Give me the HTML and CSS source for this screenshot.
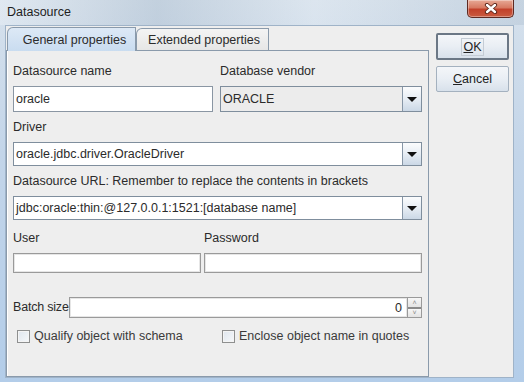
FILE: index.html
```html
<!DOCTYPE html>
<html lang="en">
<head>
    <meta charset="UTF-8">
    <title>Datasource</title>
    <link rel="stylesheet" href="styles.css">
</head>
<body>
    <div class="window">
        <div class="titlebar">
            <span class="title">Datasource</span>
            <div class="close-btn">
                <svg width="14" height="11" viewBox="0 0 14 11">
                    <path d="M3 2 L11 9 M11 2 L3 9" stroke="#5a2418" stroke-width="4.2" stroke-linecap="round"/>
                    <path d="M3 2 L11 9 M11 2 L3 9" stroke="#ffffff" stroke-width="2.4" stroke-linecap="round"/>
                </svg>
            </div>
        </div>

        <div class="client">
            <div class="tabpane">
                <div class="tabs">
                    <div class="tab selected">General properties</div>
                    <div class="tab">Extended properties</div>
                </div>
                <div class="panel">
                    <div class="row two-col">
                        <label>Datasource name</label>
                        <label>Database vendor</label>
                    </div>
                    <div class="row two-col field-row">
                        <div class="textfield tall">oracle</div>
                        <div class="combo readonly tall">
                            <span class="combo-text">ORACLE</span>
                            <span class="arrow-btn"><i class="arrow"></i></span>
                        </div>
                    </div>

                    <label class="row gap-label">Driver</label>
                    <div class="combo field-row">
                        <span class="combo-text">oracle.jdbc.driver.OracleDriver</span>
                        <span class="arrow-btn"><i class="arrow"></i></span>
                    </div>

                    <label class="row gap-label">Datasource URL: Remember to replace the contents in brackets</label>
                    <div class="combo field-row url">
                        <span class="combo-text">jdbc:oracle:thin:@127.0.0.1:1521:[database name]</span>
                        <span class="arrow-btn"><i class="arrow"></i></span>
                    </div>

                    <div class="row creds user-labels">
                        <label>User</label>
                        <label>Password</label>
                    </div>
                    <div class="row creds field-row">
                        <div class="textfield short"></div>
                        <div class="textfield short"></div>
                    </div>

                    <div class="batch-row">
                        <label class="batch-label">Batch size</label>
                        <div class="textfield short batch">0</div>
                        <div class="spinner">
                            <span class="spin up">&#708;</span>
                            <span class="spin down">&#709;</span>
                        </div>
                    </div>

                    <div class="check-row">
                        <div class="check"><span class="box"></span>Qualify object with schema</div>
                        <div class="check"><span class="box"></span>Enclose object name in quotes</div>
                    </div>
                </div>
            </div>

            <div class="buttons">
                <button class="btn default"><span class="focus"><u>O</u>K</span></button>
                <button class="btn"><u>C</u>ancel</button>
            </div>
        </div>
    </div>
</body>
</html>
```

FILE: styles.css
```css
* {
    box-sizing: border-box;
}

body {
    margin: 0;
    font-family: "Liberation Sans", Arial, sans-serif;
    font-size: 12.5px;
    color: #2b2b2b;
}

.window {
    width: 524px;
    height: 382px;
    display: flex;
    flex-direction: column;
    background: linear-gradient(to bottom, #d6e1ec 0%, #c3d5e9 40%, #b3cde9 100%);
}

.titlebar {
    height: 25px;
    display: flex;
    align-items: flex-start;
    padding-left: 7px;
    background: linear-gradient(to right, rgba(255,255,255,0.25), rgba(150,170,190,0.3) 30%, rgba(255,255,255,0.15) 60%, rgba(150,170,190,0.25));
}

.title {
    margin-top: 5px;
    color: #1e1e1e;
}

.close-btn {
    margin-left: auto;
    margin-right: 10px;
    width: 47px;
    height: 18px;
    border: 1px solid #5e2a22;
    border-top: none;
    border-radius: 0 0 5px 5px;
    background: linear-gradient(to bottom, #e7a995 0%, #d77a62 45%, #c2412a 55%, #c95b40 100%);
    display: flex;
    align-items: center;
    justify-content: center;
    box-shadow: inset 0 0 0 1px rgba(255,255,255,0.35);
}

.client {
    flex: 1;
    margin: 0 10px 4px 5px;
    border: 1px solid #9fb3c8;
    background: #eeeeee;
    display: flex;
    padding: 1px 4px 0 0;
}

.tabpane {
    width: 423px;
    display: flex;
    flex-direction: column;
}

.tabs {
    height: 24px;
    display: flex;
    align-items: flex-end;
    padding-left: 1px;
    margin-bottom: -1px;
    position: relative;
    z-index: 1;
}

.tab {
    height: 22px;
    width: 133px;
    padding: 0 0 0 3px;
    justify-content: center;
    border: 1px solid #8a9aab;
    border-bottom: none;
    border-radius: 6px 0 0 0;
    background: linear-gradient(to bottom, #f4f4f4, #e6e6e6);
    display: flex;
    align-items: center;
    margin-bottom: 1px;
}

.tab.selected {
    height: 24px;
    width: 129px;
    padding: 0 0 0 6px;
    background: linear-gradient(to bottom, #dde9f6, #c9dcf0);
    margin-bottom: 0;
}

.panel {
    flex: 1;
    border: 1px solid #8a9aab;
    box-shadow: inset 1px 0 0 #ffffff;
    padding: 13px 6px 0 6px;
}

label {
    display: block;
    line-height: 15px;
    height: 15px;
    white-space: nowrap;
}

.two-col {
    display: grid;
    grid-template-columns: 200px 1fr;
    column-gap: 7px;
}

.creds {
    display: grid;
    grid-template-columns: 188px 1fr;
    column-gap: 3px;
}

.field-row {
    margin-top: 7px;
}

.gap-label {
    margin-top: 8px;
}

.user-labels {
    margin-top: 11px;
}

.textfield {
    height: 20px;
    background: #ffffff;
    border: 1px solid #9a9a9a;
    box-shadow: inset 0 0 0 1px #e6e6e6;
    padding: 0 3px;
    display: flex;
    align-items: center;
}

.textfield.tall {
    height: 26px;
    border-color: #8a96a3;
    box-shadow: none;
    padding-left: 2px;
}

.combo {
    height: 24px;
    display: flex;
    border: 1px solid #7f8e9d;
    background: #ffffff;
}

.combo.tall {
    height: 26px;
}

.combo.readonly {
    background: #ececec;
}

.combo-text {
    flex: 1;
    display: flex;
    align-items: center;
    padding-left: 2px;
    white-space: nowrap;
    overflow: hidden;
}

.arrow-btn {
    width: 19px;
    border-left: 1px solid #8796a6;
    background: linear-gradient(to bottom, #fbfcfd, #e7edf4 50%, #cbd8e6);
    display: flex;
    align-items: center;
    justify-content: center;
}

.arrow {
    width: 0;
    height: 0;
    border-left: 5px solid transparent;
    border-right: 5px solid transparent;
    border-top: 5px solid #111111;
}

.batch-row {
    margin-top: 24px;
    display: flex;
    height: 21px;
}

.batch-label {
    flex: none;
    width: 56px;
    line-height: 21px;
    height: 21px;
    letter-spacing: -0.2px;
}

.textfield.batch {
    flex: 1;
    height: 21px;
    justify-content: flex-end;
    padding-right: 5px;
}

.spinner {
    width: 14px;
    display: flex;
    flex-direction: column;
    border: 1px solid #9a9a9a;
    border-left: none;
}

.spin {
    flex: 1;
    display: flex;
    align-items: center;
    justify-content: center;
    font-size: 7px;
    color: #8a8a8a;
    background: linear-gradient(to bottom, #f7f7f7, #e3e3e3);
}

.spin.up {
    border-bottom: 2px solid #8a8a8a;
}

.check-row {
    margin-top: 10px;
    display: grid;
    grid-template-columns: 205px 1fr;
    padding-left: 4px;
}

.check {
    display: flex;
    align-items: center;
    height: 16px;
    color: #3a3a3a;
}

.box {
    width: 13px;
    height: 13px;
    margin-right: 4px;
    border: 1px solid #8e8f8f;
    background: linear-gradient(135deg, #dfe6ee, #f6f8fa);
    box-shadow: inset 0 0 0 1px #f4f4f4;
}

.buttons {
    margin-left: 7px;
    margin-top: 6px;
    display: flex;
    flex-direction: column;
    gap: 6px;
}

.btn {
    width: 73px;
    height: 26px;
    font-family: "Liberation Sans", Arial, sans-serif;
    font-size: 12.5px;
    color: #222222;
    border: 1px solid #a4b1bf;
    border-radius: 2px;
    background: linear-gradient(to bottom, #f4f6f9, #e9eef4 50%, #d8e1eb);
    padding: 0;
}

.btn.default {
    height: 27px;
    border: 2px solid #6b7785;
}

.btn .focus {
    outline: 1px solid #c4ccd5;
    padding: 1px 1px;
}
```
